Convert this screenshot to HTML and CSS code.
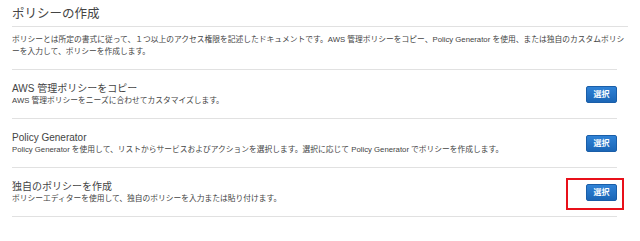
FILE: index.html
```html
<!DOCTYPE html>
<html lang="ja">
<head>
	<meta charset="UTF-8">
	<title>ポリシーの作成</title>
	<link rel="stylesheet" href="styles.css">
</head>
<body>
	<div id="wrap">
		<h1 class="title">ポリシーの作成</h1>
		<p class="intro">ポリシーとは所定の書式に従って、１つ以上のアクセス権限を記述したドキュメントです。AWS 管理ポリシーをコピー、Policy Generator を使用、または独自のカスタムポリシ<br>ーを入力して、ポリシーを作成します。</p>

		<ul class="options">
			<li>
				<div class="text">
					<h2>AWS 管理ポリシーをコピー</h2>
					<p>AWS 管理ポリシーをニーズに合わせてカスタマイズします。</p>
				</div>
				<span class="btn">選択</span>
			</li>
			<li>
				<div class="text">
					<h2>Policy Generator</h2>
					<p>Policy Generator を使用して、リストからサービスおよびアクションを選択します。選択に応じて Policy Generator でポリシーを作成します。</p>
				</div>
				<span class="btn">選択</span>
			</li>
			<li>
				<div class="text">
					<h2>独自のポリシーを作成</h2>
					<p>ポリシーエディターを使用して、独自のポリシーを入力または貼り付けます。</p>
				</div>
				<span class="btn marked">選択</span>
			</li>
		</ul>
	</div>
</body>
</html>
```

FILE: styles.css
```css
*{
	margin:0;
	padding: 0;
}
body{
	background: #fff;
	font-family: "Liberation Sans", "Noto Sans CJK JP", sans-serif;
	color: #444;
}
#wrap{
	padding: 6px 12px 0 12px;
}
.title{
	font-size: 12.5px;
	line-height: 16px;
	font-weight: normal;
	color: #444;
	padding-bottom: 4px;
	border-bottom: 1px solid #e1e1e1;
}
.intro{
	font-size: 7.75px;
	line-height: 12px;
	color: #444;
	margin: 7px 0 11px 0;
	white-space: nowrap;
}
.options{
	list-style: none;
	margin-right: 11px;
	border-top: 1px solid #e1e1e1;
}
.options li{
	display: flex;
	align-items: center;
	justify-content: space-between;
	height: 48px;
	border-bottom: 1px solid #e1e1e1;
}
.options h2{
	font-size: 10px;
	line-height: 13px;
	font-weight: normal;
	color: #444;
}
.options p{
	font-size: 7.75px;
	line-height: 12px;
	color: #444;
}
.btn{
	position: relative;
	display: block;
	width: 29px;
	height: 15px;
	line-height: 15px;
	font-size: 8px;
	font-weight: bold;
	color: #fff;
	text-align: center;
	background: linear-gradient(#2f82d6, #1b66b6);
	border: 1px solid #1a5ea8;
	border-radius: 2px;
}
.btn.marked::after{
	content: "";
	position: absolute;
	left: -21px;
	top: -7px;
	width: 54px;
	height: 28px;
	border: 2px solid #e8101a;
}
```
